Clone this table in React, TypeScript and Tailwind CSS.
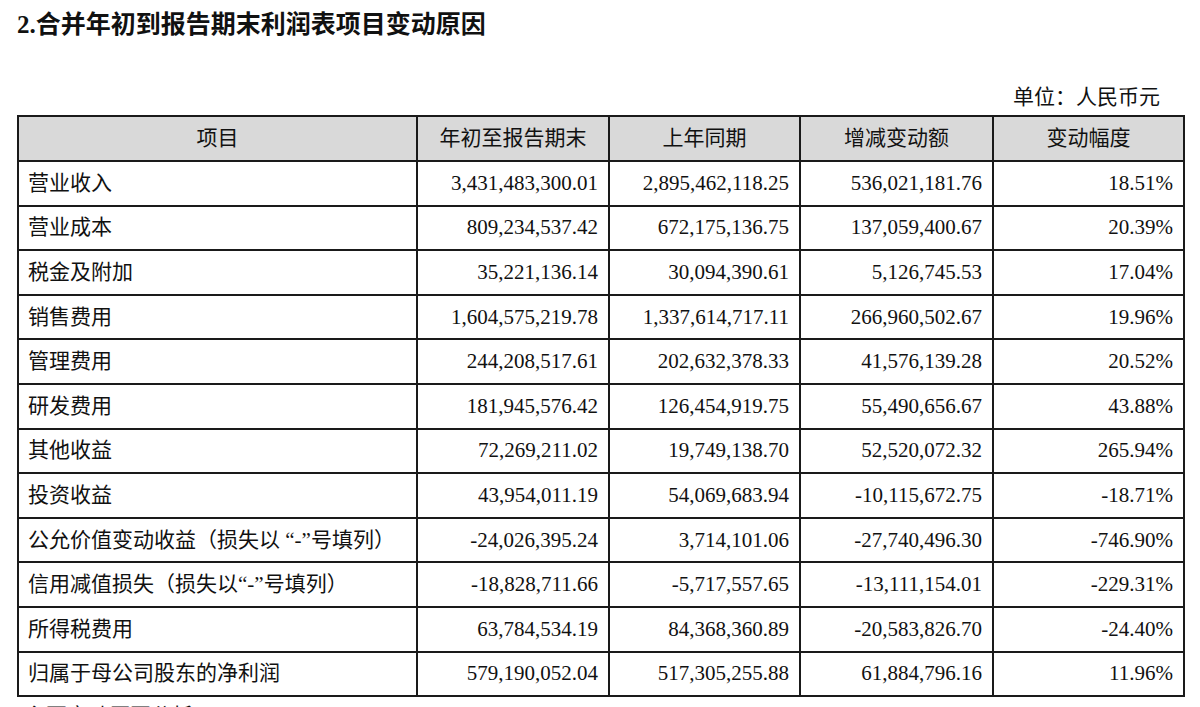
const rows = [
  ["营业收入", "3,431,483,300.01", "2,895,462,118.25", "536,021,181.76", "18.51%"],
  ["营业成本", "809,234,537.42", "672,175,136.75", "137,059,400.67", "20.39%"],
  ["税金及附加", "35,221,136.14", "30,094,390.61", "5,126,745.53", "17.04%"],
  ["销售费用", "1,604,575,219.78", "1,337,614,717.11", "266,960,502.67", "19.96%"],
  ["管理费用", "244,208,517.61", "202,632,378.33", "41,576,139.28", "20.52%"],
  ["研发费用", "181,945,576.42", "126,454,919.75", "55,490,656.67", "43.88%"],
  ["其他收益", "72,269,211.02", "19,749,138.70", "52,520,072.32", "265.94%"],
  ["投资收益", "43,954,011.19", "54,069,683.94", "-10,115,672.75", "-18.71%"],
  ["公允价值变动收益（损失以 “-”号填列）", "-24,026,395.24", "3,714,101.06", "-27,740,496.30", "-746.90%"],
  ["信用减值损失（损失以“-”号填列）", "-18,828,711.66", "-5,717,557.65", "-13,111,154.01", "-229.31%"],
  ["所得税费用", "63,784,534.19", "84,368,360.89", "-20,583,826.70", "-24.40%"],
  ["归属于母公司股东的净利润", "579,190,052.04", "517,305,255.88", "61,884,796.16", "11.96%"],
];

const headers = ["项目", "年初至报告期末", "上年同期", "增减变动额", "变动幅度"];

export default function App() {
  return (
    <div
      className="h-[707px] w-[1200px] overflow-hidden bg-white pl-[17px] pt-[10px] text-[#111]"
      style={{ fontFamily: '"Liberation Serif", "Noto Sans CJK SC", serif' }}
    >
      <h1 className="text-[25px] font-bold leading-[30px]">2.合并年初到报告期末利润表项目变动原因</h1>
      <p className="mt-[42px] w-[1143px] text-right text-[21px] leading-[30px]">单位：人民币元</p>
      <table className="mt-[3px] w-[1166px] table-fixed border-collapse text-[21px]">
        <colgroup>
          <col className="w-[399px]" />
          <col className="w-[192px]" />
          <col className="w-[191px]" />
          <col className="w-[193px]" />
          <col className="w-[191px]" />
        </colgroup>
        <thead>
          <tr className="h-[45px] bg-[#d9d9d9]">
            {headers.map((h) => (
              <th key={h} className="border-2 border-[#1a1a1a] p-0 text-center font-normal leading-none">
                {h}
              </th>
            ))}
          </tr>
        </thead>
        <tbody>
          {rows.map((r) => (
            <tr key={r[0]} className="h-[44.6px]">
              <td className="whitespace-nowrap border-2 border-[#1a1a1a] px-[9px] py-0 leading-none">{r[0]}</td>
              {r.slice(1).map((v, i) => (
                <td key={i} className="whitespace-nowrap border-2 border-[#1a1a1a] px-[10px] py-0 text-right leading-none">
                  {v}
                </td>
              ))}
            </tr>
          ))}
        </tbody>
      </table>
      <p className="mt-[4px] pl-[8px] text-[21px] leading-[30px]">主要变动原因分析</p>
    </div>
  );
}
